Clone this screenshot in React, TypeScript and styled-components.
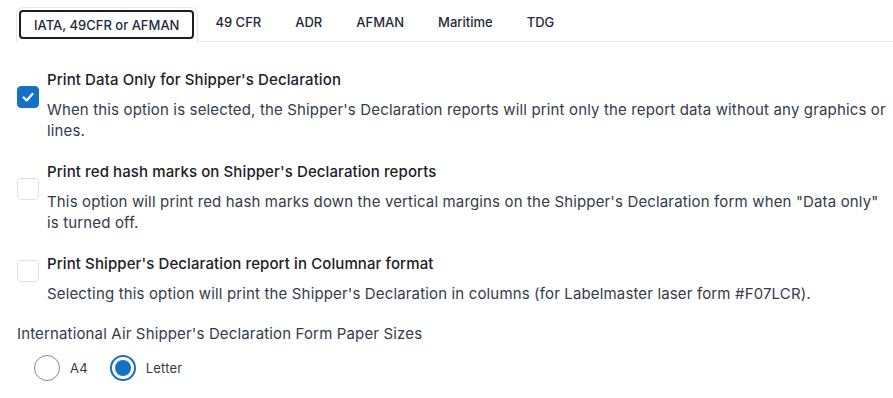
import React from "react"
import styled, { createGlobalStyle } from "styled-components"

const GlobalStyle = createGlobalStyle`
  html, body {
    margin: 0;
    padding: 0;
    background: #ffffff;
  }
  body {
    font-family: Inter, "Noto Sans", sans-serif;
    color: #1d2027;
  }
  *, *:before, *:after {
    box-sizing: border-box;
  }
`

const Page = styled.div`
  width: 893px;
  height: 398px;
  overflow: hidden;
  padding-top: 7px;
`

const TabList = styled.div`
  display: flex;
  align-items: stretch;
  padding-left: 16px;
`

const ActiveTabFrame = styled.div`
  border: 1px solid #e6e6e6;
  border-bottom: none;
  border-radius: 8px 8px 0 0;
  padding: 2px 3px 2px 2px;
  height: 35px;
`

const ActiveTab = styled.button`
  height: 29px;
  padding: 0 13px;
  border: 2px solid #1b1e25;
  border-radius: 4px;
  background: #fff;
  font-family: inherit;
  font-size: 13px;
  font-weight: 500;
  color: #1e2a3b;
  cursor: pointer;
`

const Tab = styled.button`
  height: 35px;
  padding: 0 17px 4px;
  border: none;
  border-bottom: 1px solid #e6e6e6;
  background: none;
  font-family: inherit;
  font-size: 13px;
  font-weight: 500;
  color: #1e2a3b;
  cursor: pointer;
`

const TabFill = styled.div`
  flex: 1;
  border-bottom: 1px solid #e6e6e6;
`

const Body = styled.div`
  padding: 27px 0 0 17px;
`

const Option = styled.label`
  display: flex;
  align-items: center;
  gap: 8px;
  margin-bottom: 20px;
`

const Box = styled.span<{ $checked?: boolean }>`
  flex: none;
  width: 22px;
  height: 22px;
  margin-bottom: 16px;
  border-radius: 4px;
  display: flex;
  align-items: center;
  justify-content: center;
  background: ${(p) => (p.$checked ? "#1670c4" : "#fff")};
  border: 1px solid ${(p) => (p.$checked ? "#1670c4" : "#e2e2e2")};
`

const OptionText = styled.div`
  display: flex;
  flex-direction: column;
  gap: 8px;
`

const OptionTitle = styled.div`
  font-size: 15px;
  font-weight: 500;
  line-height: 22px;
  letter-spacing: 0.1px;
  color: #1d2027;
`

const OptionDesc = styled.div`
  font-size: 15px;
  line-height: 21px;
  letter-spacing: 0.15px;
  color: #343b4a;
`

const GroupLabel = styled.div`
  font-size: 15px;
  line-height: 21px;
  letter-spacing: 0.15px;
  color: #343b4a;
  margin-top: -1px;
`

const RadioRow = styled.div`
  display: flex;
  align-items: center;
  gap: 22px;
  padding: 11px 0 0 17px;
`

const RadioItem = styled.label`
  display: flex;
  align-items: center;
  gap: 10px;
  font-size: 13px;
  color: #343b4a;
  letter-spacing: 0.2px;
`

const RadioCircle = styled.span<{ $checked?: boolean }>`
  width: 26px;
  height: 26px;
  border-radius: 50%;
  border: ${(p) => (p.$checked ? "2px solid #1670c4" : "1.5px solid #8a8a8a")};
  display: flex;
  align-items: center;
  justify-content: center;

  &::after {
    content: "";
    display: ${(p) => (p.$checked ? "block" : "none")};
    width: 16px;
    height: 16px;
    border-radius: 50%;
    background: #1670c4;
  }
`

const Check = () => (
  <svg width="14" height="14" viewBox="0 0 16 16">
    <path d="M3 8.5 L6.5 12 L13 4.5" fill="none" stroke="#fff" strokeWidth="2.6" strokeLinecap="round" strokeLinejoin="round" />
  </svg>
)

const options = [
  {
    title: "Print Data Only for Shipper's Declaration",
    desc: "When this option is selected, the Shipper's Declaration reports will print only the report data without any graphics or lines.",
    checked: true,
  },
  {
    title: "Print red hash marks on Shipper's Declaration reports",
    desc: 'This option will print red hash marks down the vertical margins on the Shipper\'s Declaration form when "Data only" is turned off.',
    checked: false,
  },
  {
    title: "Print Shipper's Declaration report in Columnar format",
    desc: "Selecting this option will print the Shipper's Declaration in columns (for Labelmaster laser form #F07LCR).",
    checked: false,
  },
]

const tabs = ["49 CFR", "ADR", "AFMAN", "Maritime", "TDG"]

const App = () => (
  <Page>
    <GlobalStyle />
    <TabList>
      <ActiveTabFrame>
        <ActiveTab>IATA, 49CFR or AFMAN</ActiveTab>
      </ActiveTabFrame>
      {tabs.map((t) => (
        <Tab key={t}>{t}</Tab>
      ))}
      <TabFill />
    </TabList>
    <Body>
      {options.map((o) => (
        <Option key={o.title}>
          <Box $checked={o.checked}>{o.checked && <Check />}</Box>
          <OptionText>
            <OptionTitle>{o.title}</OptionTitle>
            <OptionDesc>{o.desc}</OptionDesc>
          </OptionText>
        </Option>
      ))}
      <GroupLabel>International Air Shipper's Declaration Form Paper Sizes</GroupLabel>
      <RadioRow>
        <RadioItem>
          <RadioCircle />
          A4
        </RadioItem>
        <RadioItem>
          <RadioCircle $checked />
          Letter
        </RadioItem>
      </RadioRow>
    </Body>
  </Page>
)

export default App
